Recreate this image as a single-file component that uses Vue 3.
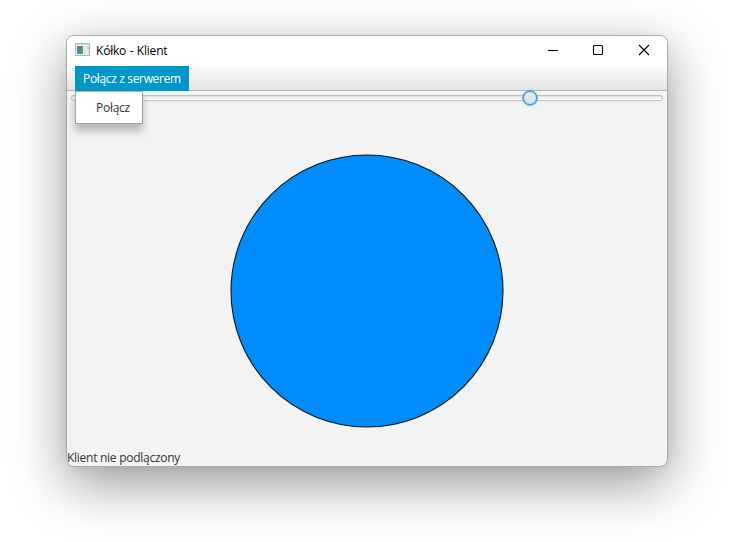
<script setup>
import { ref, computed } from 'vue'

const menuOpen = ref(true)
const position = ref(0.777)
const thumbOffset = computed(() => `${position.value * 100}%`)
</script>

<template>
  <main class="desktop">
    <section class="window">
      <header class="titlebar">
        <svg class="app-icon" width="16" height="14" viewBox="0 0 16 14">
          <defs>
            <linearGradient id="pane" x1="0" y1="0" x2="1" y2="1">
              <stop offset="0" stop-color="#4a6caa" />
              <stop offset="1" stop-color="#43b174" />
            </linearGradient>
          </defs>
          <rect x=".5" y=".5" width="14" height="12" fill="#f3f4f5" stroke="#b0b3b6" />
          <rect x="1" y="1" width="13" height="1" fill="#d5d8dc" />
          <rect x="2" y="3" width="6" height="8" fill="url(#pane)" />
          <rect x="9" y="3" width="2" height="8" fill="#dfe2e3" />
          <rect x="12" y="3" width="2" height="3" fill="#bcd3c9" />
          <rect x="12" y="6" width="2" height="5" fill="#e3e6e6" />
        </svg>
        <h1 class="title">Kółko - Klient</h1>
        <div class="controls">
          <svg width="46" height="30" viewBox="0 0 46 30"><path d="M18 14.5h10" /></svg>
          <svg width="45" height="30" viewBox="0 0 45 30"><rect x="17.5" y="9.5" width="9" height="9" rx="1" /></svg>
          <svg width="46" height="30" viewBox="0 0 46 30"><path d="M18 9l10 10M28 9l-10 10" /></svg>
        </div>
      </header>
      <nav class="menubar">
        <div class="menu">
          <span class="menu-label" @click="menuOpen = !menuOpen">Połącz z serwerem</span>
          <div v-if="menuOpen" class="popup"><span class="item">Połącz</span></div>
        </div>
      </nav>
      <div class="slider">
        <div class="track"></div>
        <div class="thumb" :style="{ left: thumbOffset }"></div>
      </div>
      <div class="canvas">
        <svg width="274" height="274" viewBox="0 0 274 274">
          <circle cx="137" cy="137" r="136" fill="#008dfb" stroke="#07151f" stroke-width="1.1" />
        </svg>
      </div>
      <footer class="status"><span>Klient nie podlączony</span></footer>
    </section>
  </main>
</template>

<style>
body {
  margin: 0;
  background: #fff;
}
</style>

<style scoped>
.desktop {
  box-sizing: border-box;
  width: 744px;
  height: 542px;
  padding: 35px 76px 75px 66px;
  overflow: hidden;
  background: #fff;
  font: 12px/16px "Open Sans", "Noto Sans", sans-serif;
  color: #333;
}
.window {
  box-sizing: border-box;
  display: flex;
  flex-direction: column;
  width: 602px;
  height: 432px;
  border: 1px solid #aaa;
  border-radius: 8px;
  background: #f3f3f3;
  box-shadow: 0 17px 54px rgba(0, 0, 0, .4), 0 2px 14px rgba(0, 0, 0, .06);
}
.titlebar {
  display: flex;
  align-items: flex-start;
  height: 30px;
  flex: none;
  border-radius: 7px 7px 0 0;
  background: #fff;
}
.app-icon {
  margin: 7px 5px 0 8px;
}
.title {
  margin: 7px 0 0;
  font: 12px/16px "Open Sans", sans-serif;
  letter-spacing: -.2px;
  word-spacing: .6px;
  color: #000;
}
.controls {
  display: flex;
  margin-left: auto;
}
.controls svg {
  fill: none;
  stroke: #000;
  stroke-width: 1.1;
}
.menubar {
  box-sizing: border-box;
  display: flex;
  flex: none;
  height: 25px;
  padding-left: 8px;
  border-bottom: 1px solid #b5b5b5;
  background: linear-gradient(#fbfbfb, #e4e4e4);
}
.menu {
  position: relative;
  z-index: 2;
  height: 25px;
}
.menu-label {
  box-sizing: border-box;
  display: block;
  width: 114px;
  height: 25px;
  padding: 5px 0 0 8px;
  background: #0096c9;
  color: #fff;
  letter-spacing: -.34px;
  white-space: nowrap;
}
.popup {
  position: absolute;
  top: 25px;
  left: 0;
  box-sizing: border-box;
  width: 68px;
  height: 33px;
  padding: 8px 0 0 20px;
  border: 1px solid #a0a0a0;
  border-top-color: #b5b5b5;
  background: #fff;
  box-shadow: 0 7px 8px rgba(0, 0, 0, .25);
}
.item {
  letter-spacing: -.28px;
}
.slider {
  position: relative;
  flex: none;
  height: 14px;
  padding: 4px 4px 0;
  box-sizing: border-box;
}
.track {
  box-sizing: border-box;
  height: 6px;
  border: 1px solid #bfbfbf;
  border-radius: 3px;
  background: linear-gradient(#e4e4e4, #fff);
}
.thumb {
  position: absolute;
  top: 0;
  box-sizing: border-box;
  width: 14px;
  height: 14px;
  margin-left: -10px;
  border: 1px solid #0ba3d1;
  border-radius: 50%;
  background: linear-gradient(#eee, #dcdcdc);
  box-shadow: 0 0 0 .6px #0ba3d1, 0 0 3px rgba(3, 158, 211, .5);
}
.canvas {
  display: flex;
  flex: 1;
  align-items: center;
  justify-content: center;
  padding-top: 27px;
}
.canvas svg {
  display: block;
}
.status {
  flex: none;
  height: 17px;
  line-height: 17px;
  letter-spacing: -.27px;
}
</style>
